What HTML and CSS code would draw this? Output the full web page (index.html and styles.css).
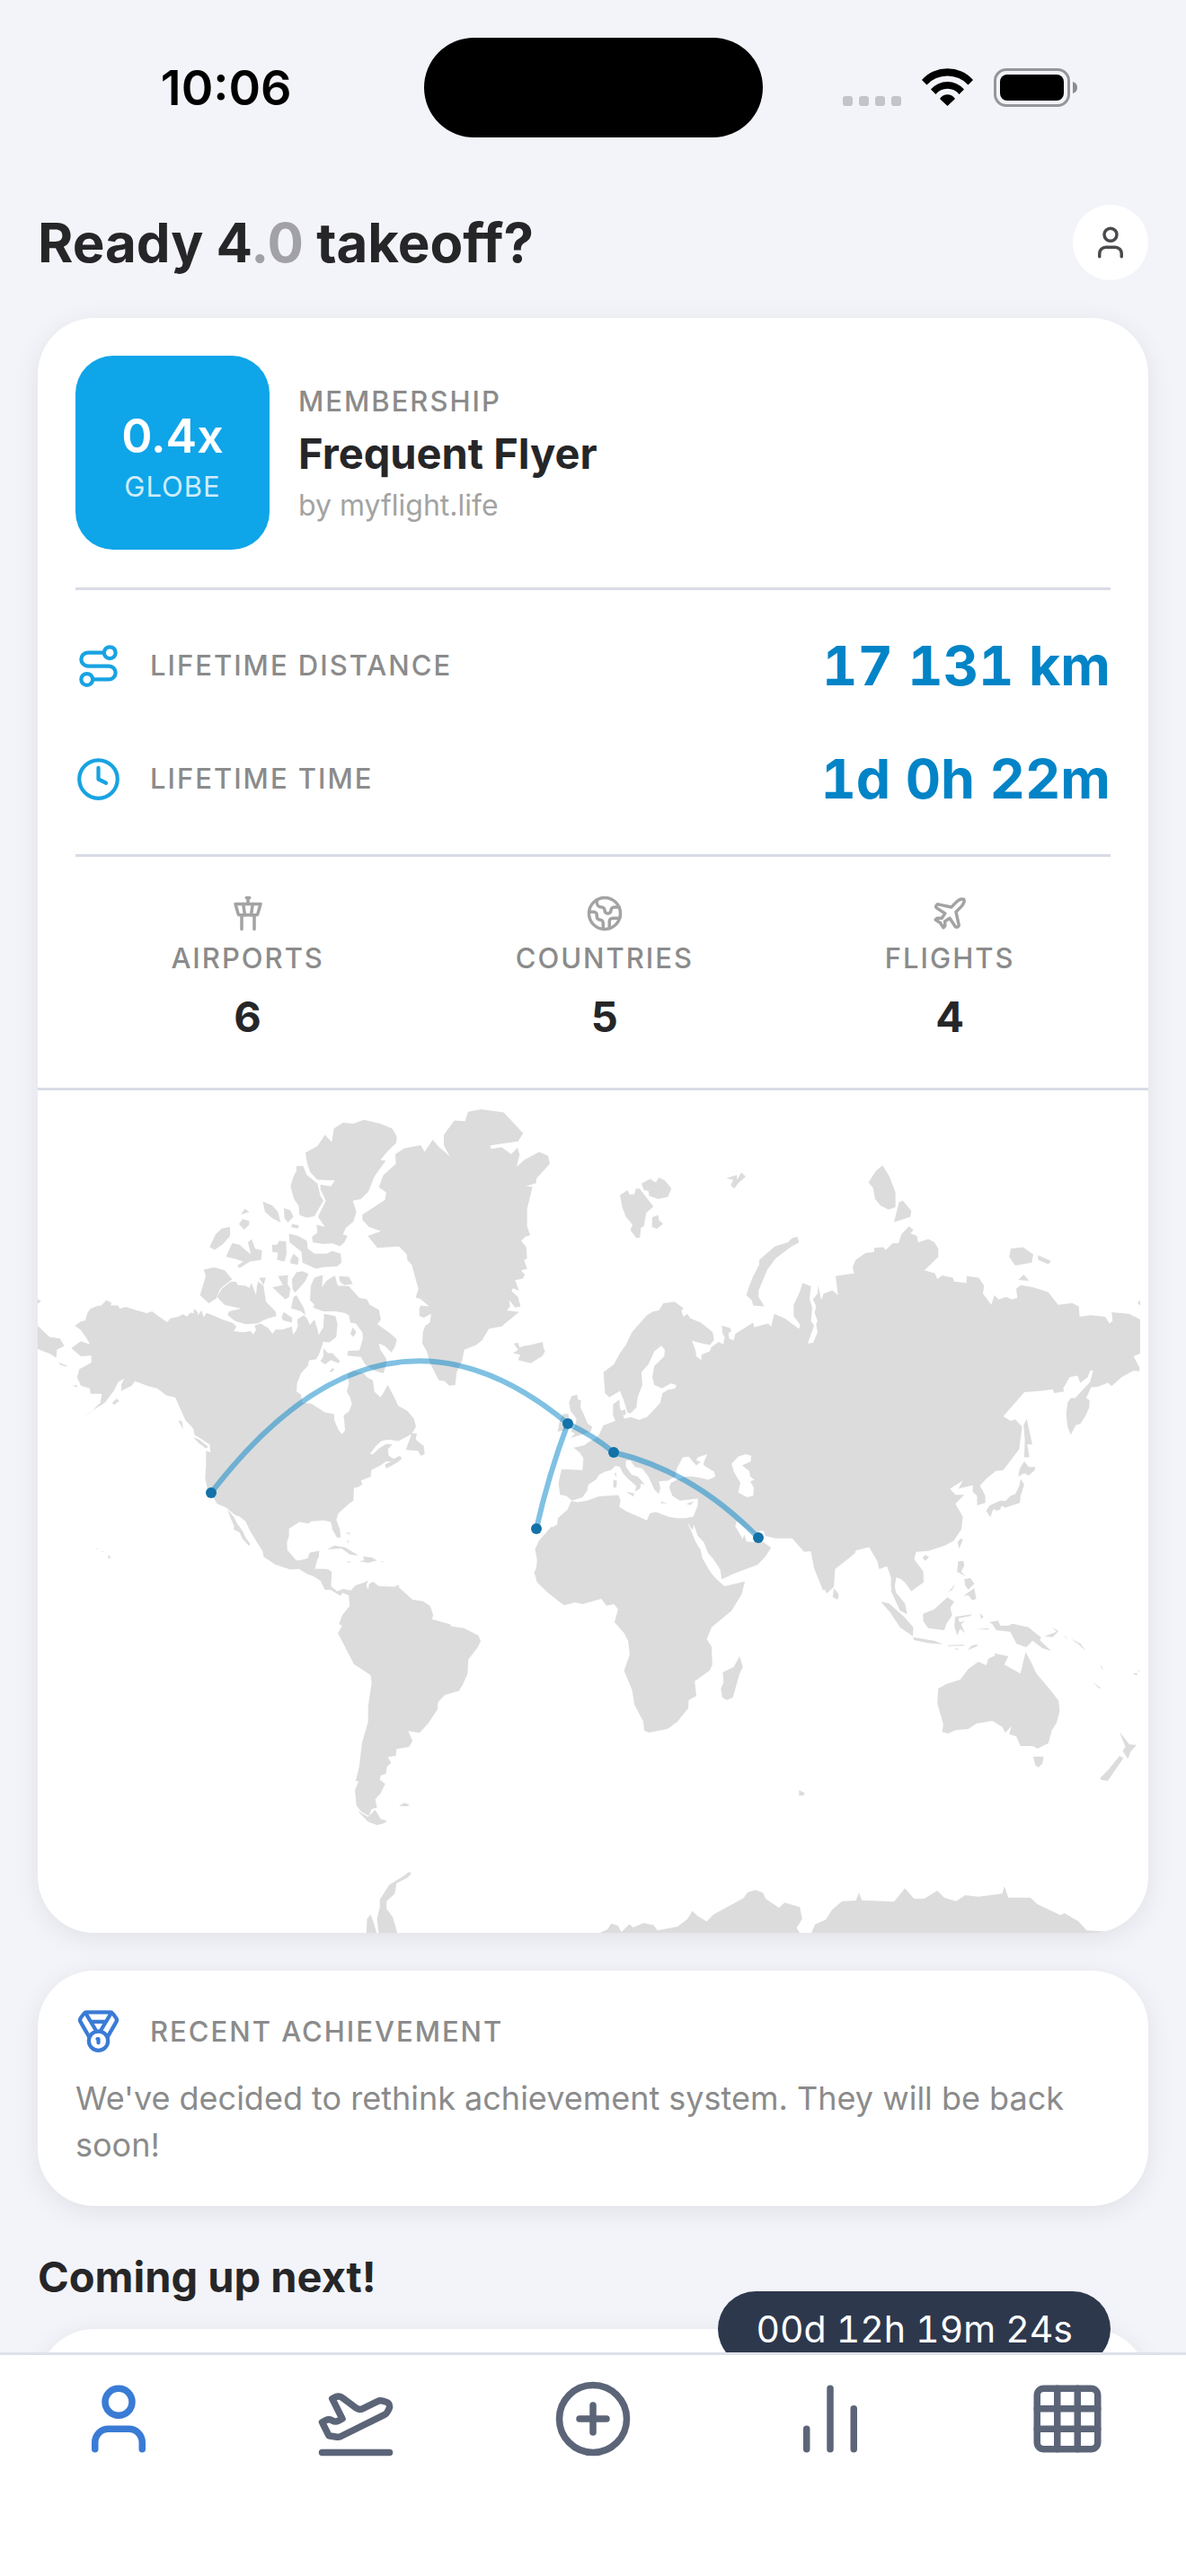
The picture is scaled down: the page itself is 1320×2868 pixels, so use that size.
FILE: index.html
```
<!DOCTYPE html>
<html lang="en">
<head>
  <meta charset="UTF-8" />
  <meta name="viewport" content="width=device-width, initial-scale=1.0" />
  <title>myflight.life</title>
  <link rel="stylesheet" href="styles.css">
</head>
<body>
  <div class="app">
    <div class="status-bar">
      <span class="time">10:06</span>
      <span class="island"></span>
      <svg class="status-icons" viewBox="0 0 261 43" aria-hidden="true">
        <g fill="#c2c4c8">
          <rect x="0" y="31" width="11" height="11" rx="3" />
          <rect x="18" y="31" width="11" height="11" rx="3" />
          <rect x="36" y="31" width="11" height="11" rx="3" />
          <rect x="54" y="31" width="11" height="11" rx="3" />
        </g>
        <path d="M88 13A38 38 0 0 1 145 13L139.500 18.500A31.500 31.500 0 0 0 93.500 18.500Z" />
        <path d="M98 23.500A24.400 24.400 0 0 1 135 23.500L129.500 29A16.600 16.600 0 0 0 103.500 29Z" />
        <path d="M108 34A10 10 0 0 1 125 34L116.500 42Z" />
        <rect x="169.500" y="1.500" width="82" height="40" rx="12.500" fill="none" stroke="#959699" stroke-width="3" />
        <rect x="175" y="7" width="71" height="29" rx="8" />
        <path d="M256 15c3.500 1 5 3.500 5 6.500s-1.500 5.500-5 6.500z" fill="#8b8c8f" />
      </svg>
    </div>

    <main class="content">
      <header class="header">
        <h1>Ready 4<span class="muted">.0</span> takeoff?</h1>
        <button class="avatar" aria-label="Profile">
          <svg class="icon" viewBox="0 0 24 24"><path d="M19 21v-2a4 4 0 0 0-4-4H9a4 4 0 0 0-4 4v2" /><circle cx="12" cy="7" r="4" /></svg>
        </button>
      </header>

      <section class="card">
        <div class="card-body">
          <div class="membership">
            <div class="globe">
              <strong>0.4x</strong>
              <span>GLOBE</span>
            </div>
            <div class="member-info">
              <span class="label">MEMBERSHIP</span>
              <h2>Frequent Flyer</h2>
              <span class="by">by myflight.life</span>
            </div>
          </div>

          <div class="lifetime">
            <div class="row">
              <svg class="icon blue" viewBox="0 0 24 24"><circle cx="6" cy="19" r="3" /><path d="M9 19h8.500a3.500 3.500 0 0 0 0-7h-11a3.500 3.500 0 0 1 0-7H15" /><circle cx="18" cy="5" r="3" /></svg>
              <span class="label">LIFETIME DISTANCE</span>
              <strong class="value">17 131 km</strong>
            </div>
            <div class="row">
              <svg class="icon blue" viewBox="0 0 24 24"><circle cx="12" cy="12" r="10" /><path d="M12 6v6l4 2" /></svg>
              <span class="label">LIFETIME TIME</span>
              <strong class="value">1d 0h 22m</strong>
            </div>
          </div>

          <div class="stats">
            <div class="stat">
              <svg class="icon" viewBox="0 0 24 24"><path d="M18.200 12.270 20 6H4l1.800 6.270a1 1 0 0 0 .95.73h10.500a1 1 0 0 0 .96-.73Z" /><path d="M8 13v9M16 22v-9M9 6l1 7M15 6l-1 7M12 6V2M13 2h-2" /></svg>
              <span class="label">AIRPORTS</span>
              <strong>6</strong>
            </div>
            <div class="stat">
              <svg class="icon" viewBox="0 0 24 24"><path d="M21.540 15H17a2 2 0 0 0-2 2v4.540" /><path d="M7 3.340V5a3 3 0 0 0 3 3a2 2 0 0 1 2 2c0 1.100.9 2 2 2a2 2 0 0 0 2-2c0-1.100.9-2 2-2h3.170" /><path d="M11 21.950V18a2 2 0 0 0-2-2a2 2 0 0 1-2-2v-1a2 2 0 0 0-2-2H2.050" /><circle cx="12" cy="12" r="10" /></svg>
              <span class="label">COUNTRIES</span>
              <strong>5</strong>
            </div>
            <div class="stat">
              <svg class="icon" viewBox="0 0 24 24"><path d="M17.800 19.200 16 11l3.500-3.500C21 6 21.500 4 21 3c-1-.5-3 0-4.500 1.500L13 8 4.800 6.200c-.5-.1-.9.1-1.100.5l-.3.5c-.2.5-.1 1 .3 1.300L9 12l-2 3H4l-1 1 3 2 2 3 1-1v-3l3-2 3.500 5.300c.3.4.8.5 1.300.3l.5-.2c.4-.3.6-.7.5-1.200z" /></svg>
              <span class="label">FLIGHTS</span>
              <strong>4</strong>
            </div>
          </div>
        </div>

        <svg class="map" viewBox="42 1214 1236 938" role="img" aria-label="Flight map">
          <!-- North America -->
          <g class="land" transform="translate(40 1210) scale(.3333 .3571)">
            <path d="M130 745L148 733 165 728 172 705 182 692 205 683 218 682 235 665 252 673 250 682 275 682 280 692 300 686 330 695 370 706 388 700 412 717 438 734 450 722 475 717 490 709 505 716 515 704 527 706 527 692 540 702 540 713 553 697 560 718 570 705 590 712 622 725 640 731 655 735 670 748 660 762 690 765 718 762 725 772 735 758 730 745 750 738 775 752 790 770 800 757 822 757 855 748 858 772 868 762 875 745 872 725 895 712 905 722 915 742 930 725 938 750 945 775 955 755 962 775 958 800 945 835 935 850 912 853 908 870 885 893 872 925 870 950 885 960 890 985 920 988 945 1003 965 1015 995 1020 997 1040 1010 1070 1022 1083 1032 1072 1030 1045 1027 1025 1045 1012 1055 990 1050 970 1038 950 1045 925 1040 895 1060 885 1095 893 1105 905 1125 915 1130 950 1150 968 1160 955 1175 930 1195 965 1210 995 1240 1010 1262 1035 1269 1060 1255 1082 1230 1095 1210 1105 1180 1100 1155 1103 1135 1120 1115 1145 1125 1145 1145 1128 1170 1113 1190 1115 1175 1130 1178 1150 1195 1160 1215 1150 1222 1160 1205 1172 1170 1190 1165 1178 1185 1168 1170 1168 1150 1180 1120 1195 1118 1215 1085 1228 1090 1240 1075 1248 1062 1250 1060 1290 1045 1300 1010 1330 1003 1350 1015 1380 1018 1405 1005 1405 990 1380 985 1357 960 1352 920 1355 910 1362 880 1357 845 1378 845 1400 838 1420 840 1450 855 1475 880 1477 910 1470 915 1452 945 1447 945 1465 935 1480 930 1503 965 1503 988 1512 985 1568 965 1568 950 1540 925 1525 905 1515 880 1500 850 1505 800 1490 760 1465 758 1450 735 1415 715 1385 700 1355 680 1340 665 1335 635 1312 605 1300 595 1285 575 1265 565 1220 568 1180 568 1135 583 1140 580 1115 555 1100 530 1085 525 1065 500 1040 485 1010 465 968 435 962 405 940 375 933 330 918 320 932 285 948 285 928 295 910 275 920 262 945 230 985 150 1032 185 1012 215 985 220 957 182 957 180 940 150 932 137 905 145 880 165 870 185 860 185 838 150 840 118 815 150 793 180 803 170 785 148 757Z" />
            <path d="M640 1318L660 1340 672 1362 690 1385 700 1405 715 1425 712 1432 690 1410 680 1390 660 1380 662 1370 650 1345Z" />
            <path d="M605 655L620 630 650 608 668 608 675 618 700 620 712 627 720 612 735 650 738 620 742 607 760 620 768 670 800 700 803 715 775 722 755 730 740 738 700 740 665 730 640 712 645 700 685 692 630 680 622 672Z" />
            <path d="M560 570L595 563 630 572 655 600 615 630 602 660 577 675 548 650 567 590Z" />
            <path d="M580 500L600 460 620 442 648 437 648 465 625 490 597 508ZM635 530L655 487 680 492 700 510 718 522 708 485 720 475 732 505 755 510 752 540 715 545 680 565 672 558 692 545 670 538Z" />
            <path d="M678 428L690 412 712 418 712 430 695 445ZM685 398L697 380 713 390ZM757 357L790 370 808 390 817 423 790 410 765 390ZM828 378L850 385 860 405 842 423 830 410ZM855 428L878 432 875 442 853 438Z" />
            <path d="M788 493L805 492 812 480 835 482 837 520 830 545 805 540 808 517 790 515ZM850 540L860 520 878 535 875 555 850 550Z" />
            <path d="M845 458L875 465 905 480 908 505 930 520 970 520 990 512 1018 520 1020 548 1005 560 960 562 935 567 890 548 887 515 865 498 847 485Z" />
            <path d="M850 310L860 280 870 262 870 247 892 247 905 275 940 302 950 340 960 355 930 403 905 408 880 400 877 370 862 350Z" />
            <path d="M900 205L940 185 965 150 988 172 995 130 1025 112 1060 115 1095 103 1150 115 1190 130 1205 155 1203 175 1175 200 1150 228 1168 230 1130 280 1110 327 1085 350 1058 355 1070 390 1060 420 1035 440 1025 460 1040 465 1030 485 1015 497 990 488 960 490 925 485 922 468 940 455 937 430 965 437 942 405 968 355 950 320 950 305 985 310 998 292 940 290 915 265 905 235Z" />
            <path d="M790 625L825 618 808 590 842 587 840 615 850 630 845 655 833 663 812 645ZM855 600L870 578 890 575 910 583 900 605 885 622 865 642 857 630ZM860 655L870 650 895 690 900 712 885 700 852 690ZM745 595L768 595 760 618ZM820 718L828 702 855 720 855 735 825 728Z" />
            <path d="M918 620L930 595 958 587 955 625 970 605 998 588 1008 620 1025 620 1045 622 1080 658 1105 662 1115 680 1145 695 1152 725 1140 740 1185 770 1205 787 1200 808 1187 828 1165 808 1145 800 1150 820 1170 848 1170 865 1160 893 1130 885 1100 867 1085 842 1040 838 1042 823 1080 822 1092 785 1090 765 1068 738 1050 735 1045 712 1030 705 1000 700 960 700 925 688 930 680 915 665Z" />
            <path d="M1050 770L1058 750 1070 765 1060 780ZM1012 590L1045 592 1058 615 1030 618 1015 608ZM962 708L1000 715 1007 740 1003 780 980 797 960 795 945 775 960 750Z" />
            <path d="M960 815L975 830 990 830 1015 855 1010 862 985 852 965 865 950 855 960 840ZM980 888L990 877 998 880 988 890Z" />
            <path d="M525 1093L545 1100 575 1122 568 1128 545 1112ZM475 1040L487 1042 492 1068ZM255 985L270 972 278 980 260 992ZM122 932L135 930 140 937ZM240 1460L250 1465 243 1473ZM218 1447L226 1449 222 1451ZM202 1439L206 1440 203 1443Z" />
            <path d="M6 745L45 780 80 785 95 808 70 820 68 845 45 832 6 818ZM77 860L105 870 100 872 80 866ZM6 662L17 668 6 676Z" />
            <path d="M1030 1392L1048 1390 1048 1398 1044 1394ZM1040 1410L1046 1420 1042 1422Z" />
          </g>
          <!-- Greenland, Europe, North Africa -->
          <g class="land" transform="translate(400 1210) scale(.3333 .3571)">
            <path d="M120 210L150 192 205 182 218 203 245 165 265 187 302 217 282 183 282 150 317 105 353 107 363 78 405 70 482 80 547 145 530 170 437 183 440 193 475 188 507 210 528 190 535 212 525 250 550 228 600 203 630 215 636 240 592 285 590 300 557 310 578 312 560 380 560 435 570 463 555 467 540 480 557 500 560 535 550 540 560 568 540 572 552 585 547 598 520 603 533 636 512 628 508 637 530 655 538 685 520 688 500 665 503 685 492 697 533 702 475 747 432 755 410 790 390 805 350 820 343 855 325 890 320 930 300 932 285 918 265 915 235 860 225 825 210 800 212 765 220 745 235 735 240 708 215 720 200 715 200 690 205 682 233 685 205 662 188 657 197 630 175 555 160 540 158 522 132 498 60 502 28 465 72 450 32 437 10 415 10 398 85 353 90 330 65 313 80 275 122 240Z" />
            <path d="M155 1132L175 1080 192 1080 188 1100 215 1120 218 1145 205 1150 195 1135Z" />
            <path d="M515 800L530 798 535 812 550 808 570 805 592 800 612 795 615 815 620 825 610 840 572 862 530 852 537 835 513 830 530 820Z" />
            <path d="M870 338L895 322 902 335 918 335 923 318 935 317 982 373 958 393 950 435 940 440 937 470 925 472 905 447 912 430 890 405 878 375ZM942 302L970 287 990 298 1000 283 1020 292 1042 317 1030 343 998 350 968 340 965 325 950 322ZM978 407L998 400 1000 415 1014 427 993 443 977 437Z" />
            <path d="M708 965L727 960 730 975 740 977 738 1000 750 1022 762 1050 778 1060 772 1075 740 1085 705 1095 720 1080 705 1075 720 1060 725 1035 705 1010 700 985ZM662 1075L668 1045 680 1020 698 1020 700 1050 690 1070Z" />
            <path d="M815 890L850 865 870 830 890 805 910 765 960 712 982 700 1000 697 1015 675 1052 670 1082 690 1075 698 1082 717 1095 708 1105 722 1140 735 1180 765 1184 790 1170 805 1145 800 1110 792 1122 820 1125 840 1142 852 1142 835 1170 825 1175 812 1200 795 1215 803 1220 780 1213 770 1210 745 1238 752 1242 762 1232 768 1235 785 1235 1525 1210 1535 1205 1505 1180 1470 1165 1455 1150 1420 1130 1400 1117 1365 1112 1383 1097 1360 1110 1400 1140 1445 1145 1470 1170 1510 1200 1545 1212 1558 1212 1568 620 1568 610 1555 583 1515 597 1490 595 1450 587 1440 610 1405 640 1375 660 1365 663 1345 695 1318 707 1292 730 1295 760 1290 800 1277 865 1273 872 1290 868 1310 895 1325 920 1335 960 1352 970 1330 990 1325 1030 1340 1060 1345 1090 1345 1115 1340 1130 1305 1130 1283 1105 1287 1070 1290 1045 1275 1035 1250 1040 1235 1060 1225 1090 1215 1115 1215 1145 1220 1165 1225 1188 1215 1185 1200 1150 1180 1150 1170 1162 1145 1130 1155 1125 1165 1140 1170 1125 1180 1110 1165 1100 1153 1080 1155 1060 1190 1055 1215 1030 1228 1000 1230 1005 1250 1000 1270 985 1255 965 1215 945 1190 920 1185 905 1165 890 1165 890 1185 910 1210 930 1215 953 1240 940 1238 938 1252 920 1262 925 1245 895 1220 880 1205 870 1185 855 1182 840 1195 820 1200 800 1210 790 1225 765 1240 760 1260 745 1280 710 1290 690 1275 670 1272 665 1235 675 1192 745 1195 748 1158 735 1140 715 1125 750 1118 770 1105 790 1095 800 1085 815 1055 845 1045 855 1040 847 1025 847 990 868 975 870 1000 885 1035 905 1030 935 1038 960 1030 980 1010 1005 985 1012 955 1030 945 1055 940 1058 930 1040 925 1010 940 985 930 978 905 985 870 1018 840 1020 820 1008 807 985 825 965 865 942 890 945 930 930 965 925 1000 905 1018 895 1015 882 975 870 948 835 968 820 955Z" />
            <path d="M890 1262L918 1268 915 1278ZM848 1225L860 1228 858 1250 848 1248ZM852 1205L858 1203 857 1218ZM1005 1293L1030 1298 1008 1299ZM1092 1300L1118 1292 1105 1304ZM874 1010L888 1005 890 1022 880 1024Z" />
          </g>
          <!-- Asia -->
          <g class="land" transform="translate(800 1210) scale(.3333 .3571)">
            <path d="M20 798L32 765 30 785 50 790 55 770 115 735 118 750 165 738 175 748 185 708 220 722 268 755 272 742 250 715 250 680 270 640 280 612 308 622 303 660 312 690 308 730 318 745 297 800 315 798 330 765 325 740 330 730 320 705 325 685 315 662 330 645 332 618 342 665 350 645 380 635 398 650 390 590 452 582 447 562 457 540 490 518 518 515 520 502 548 500 558 508 580 488 600 487 610 460 635 435 650 447 640 457 662 465 665 485 700 475 720 485 733 505 733 530 687 572 722 582 730 600 745 588 782 595 785 607 827 612 828 590 868 595 886 620 882 645 910 680 920 650 935 663 960 655 978 663 997 658 993 630 1008 618 1050 625 1100 640 1133 680 1180 674 1202 685 1205 717 1240 712 1290 717 1305 738 1315 730 1312 703 1370 708 1407 725 1407 832 1385 840 1405 875 1405 887 1385 885 1345 905 1312 933 1300 923 1265 935 1243 937 1227 970 1238 978 1237 1000 1225 1025 1208 1050 1192 1055 1175 1085 1165 1060 1160 1020 1165 985 1175 970 1190 970 1240 920 1250 885 1240 885 1232 905 1207 923 1198 900 1172 905 1150 940 1153 950 1120 955 1115 943 1085 947 1020 952 950 1028 975 1042 990 1037 1013 1060 1003 1130 950 1195 925 1198 895 1220 872 1243 890 1275 890 1297 863 1305 862 1275 848 1262 848 1242 800 1253 815 1228 772 1253 790 1272 820 1272 790 1300 815 1340 810 1380 785 1415 755 1430 700 1447 660 1450 650 1470 682 1510 683 1545 645 1568 610 1535 593 1530 585 1568 575 1560 575 1530 562 1495 535 1503 530 1480 502 1435 460 1445 440 1465 385 1505 385 1540 372 1568 347 1568 318 1500 308 1448 285 1450 245 1408 190 1408 155 1400 150 1385 135 1385 130 1400 110 1390 60 1355 55 1370 80 1410 85 1395 92 1418 120 1420 150 1420 175 1437 155 1465 130 1490 45 1520 20 1530Z" />
            <path class="water" d="M43 1175L65 1153 90 1145 108 1150 107 1168 78 1180 102 1198 105 1215 120 1225 105 1230 117 1250 115 1275 95 1280 65 1265 72 1235 50 1200Z" />
            <path d="M92 650L102 620 115 590 135 555 135 540 188 497 230 485 245 472 262 467 268 485 240 500 190 535 162 570 133 635 133 655 152 685 115 682 110 665Z" />
            <path d="M500 298L525 262 547 245 570 280 590 330 590 375 567 383 540 370 522 350 515 315ZM585 422L602 360 615 355 643 387 640 405ZM25 285L60 275 62 290 75 267 90 280 65 300 52 317 40 307 48 290Z" />
            <path d="M970 530L975 505 1015 500 1050 522 1045 548 990 557ZM1065 525L1110 543 1100 553 1067 540ZM1000 602L1018 585 1037 605ZM1398 674L1407 665 1407 682Z" />
            <path d="M1018 1055L1028 1035 1047 1115 1030 1115 1037 1155 1020 1155 1022 1100ZM1000 1215L1005 1190 1020 1168 1035 1185 1057 1185 1055 1195 1035 1212 1020 1205ZM1008 1222L1020 1240 1008 1275 1005 1297 955 1313 945 1303 975 1275 990 1270 1003 1245ZM893 1322L905 1305 940 1290 960 1292 955 1305 915 1320 907 1342ZM922 1316L942 1310 940 1318 925 1322Z" />
            <path d="M797 1420L808 1408 815 1412 803 1440ZM680 1468L690 1460 702 1465 690 1478Z" />
          </g>
          <!-- Central and South America -->
          <g class="land" transform="translate(40 1700) scale(.3954 .3333)">
            <path d="M640 95L700 130 720 142 740 140 765 158 795 170 822 205 850 225 858 230 862 220 885 230 885 212 865 207 848 215 828 195 832 150 822 142 785 140 798 82 770 88 765 105 735 115 710 80Z" />
            <path d="M880 220L900 195 925 185 935 178 930 195 935 210 938 190 950 183 965 198 1020 200 1060 243 1090 248 1110 265 1118 295 1115 308 1165 325 1170 332 1205 338 1245 362 1252 380 1245 400 1217 443 1215 490 1200 530 1190 548 1150 562 1132 585 1130 610 1105 655 1080 688 1048 682 1060 715 1050 735 1015 742 1013 765 990 768 1000 788 988 800 985 825 970 830 968 845 983 858 970 890 955 910 960 938 945 942 937 965 915 950 902 930 898 880 908 850 900 848 910 800 918 720 935 650 935 600 945 520 942 495 895 458 850 355 862 330 853 325 862 295 883 265Z" />
            <path d="M905 948L935 968 955 945 970 975 988 982 980 990 960 996 935 985ZM1022 932L1035 922 1052 927 1045 933Z" />
            <path d="M820 75L840 62 870 68 908 95 885 93 860 72ZM908 115L925 112 920 98 945 102 960 112 935 120ZM875 114L890 118 878 119ZM970 114L985 116 972 117ZM1008 198L1022 194 1022 202Z" />
            <path d="M930 1360L932 1310 942 1295 950 1320 960 1360ZM965 1360L960 1310 968 1270 968 1245 995 1195 1030 1170 1050 1152 1057 1158 1045 1172 1015 1190 1010 1225 987 1250 987 1275 1005 1305 1018 1360Z" />
          </g>
          <!-- Africa, South Asia, Oceania, Antarctica -->
          <g class="land" transform="translate(600 1700) scale(.4464 .3333)">
            <path d="M30 0L0 45 -10 75 -5 110 -8 150 -11 155 -5 185 22 220 62 262 90 252 108 258 155 240 168 263 187 258 197 275 188 318 212 355 222 380 226 425 212 480 232 545 238 595 260 650 262 680 273 687 320 675 345 650 372 605 373 578 392 565 388 515 425 480 432 460 430 400 418 375 430 335 480 280 505 225 513 182 462 198 447 180 430 160 405 100 375 0Z" />
            <path d="M500 432L508 468 500 490 483 570 468 578 457 570 453 540 460 520 458 485 485 468Z" />
            <path d="M677 80L690 150 717 222 735 200 738 140 790 85ZM732 235L735 205 747 225 745 242Z" />
            <path d="M840 80L850 140 868 130 880 175 878 215 900 280 918 292 912 255 890 220 885 185 890 165 910 180 928 215 958 185 958 150 935 110 940 80Z" />
            <path d="M852 250L872 255 910 300 933 335 932 365 900 335 875 285ZM932 368L985 380 1007 392 970 388 935 378Z" />
            <path d="M957 290L985 275 1018 235 1035 250 1025 270 1030 295 1015 325 1010 345 970 338 958 315ZM1038 300L1080 292 1075 298 1045 305 1048 318 1062 315 1052 325 1062 355 1050 340 1042 362 1035 330Z" />
            <path d="M1045 115L1058 113 1060 130 1052 150 1065 165 1042 150ZM1058 230L1085 205 1090 240 1080 245 1070 228ZM1060 175L1075 170 1085 190 1070 210 1062 195ZM1020 218L1038 190 1030 210Z" />
            <path d="M1018 395L1060 393 1058 397 1020 398ZM1068 412L1080 395 1095 392 1090 400ZM1100 288L1108 300 1102 308ZM1088 342L1122 338 1120 343ZM1035 405L1048 408 1042 411Z" />
            <path d="M1122 318L1145 313 1150 330 1170 330 1180 323 1220 335 1252 370 1248 378 1277 415 1255 405 1230 380 1215 402 1190 390 1175 350 1140 345 1130 325ZM1260 365L1290 350 1280 335 1295 348 1280 368ZM1308 360L1318 375 1312 370ZM1325 373L1350 390 1363 415 1348 395Z" />
            <path d="M995 540L1015 525 1050 510 1070 475 1095 450 1115 462 1120 440 1137 430 1135 422 1170 432 1160 460 1200 490 1213 418 1228 455 1240 490 1275 545 1295 580 1298 615 1290 655 1278 680 1270 722 1243 740 1230 732 1200 732 1190 700 1172 692 1178 665 1162 688 1155 668 1130 648 1090 657 1070 675 1040 678 1020 690 1005 685 1008 660 993 590Z" />
            <path d="M1232 767L1258 767 1255 790 1245 803 1237 795ZM1447 685L1465 715 1472 727 1490 728 1475 750 1468 775 1455 748 1462 735ZM1398 840L1420 810 1447 765 1457 772 1440 805 1418 848 1402 845Z" />
            <path d="M1380 517L1402 540 1395 538ZM1480 490L1492 488 1490 496ZM1400 460L1407 478 1402 472ZM1492 482L1498 478 1496 483ZM648 880L662 888 660 897 648 897Z" />
            <path d="M145 1360L170 1345 180 1325 197 1332 205 1353 225 1328 235 1338 260 1323 285 1330 295 1348 345 1335 370 1310 382 1283 395 1300 418 1318 435 1295 480 1262 510 1240 520 1220 540 1213 558 1222 565 1242 598 1272 612 1255 650 1270 656 1310 642 1340 652 1360Z" />
            <path d="M678 1360L688 1328 715 1312 730 1280 755 1250 790 1248 797 1222 805 1247 885 1252 912 1207 935 1242 960 1242 993 1215 1010 1238 1040 1250 1062 1230 1095 1235 1155 1225 1160 1200 1170 1238 1225 1238 1242 1260 1300 1297 1310 1290 1345 1318 1365 1348 1415 1352 1400 1360Z" />
          </g>
          <g class="routes">
            <path d="M235 1662Q426 1414 632 1585" />
            <path d="M632 1585Q660 1598 683 1617" />
            <path d="M683 1617Q772 1638 844 1712" />
            <path d="M632 1585Q611 1640 597 1702" />
          </g>
          <g class="airports">
            <circle cx="235" cy="1662" r="6" />
            <circle cx="632" cy="1585" r="6" />
            <circle cx="683" cy="1617" r="6" />
            <circle cx="597" cy="1702" r="6" />
            <circle cx="844" cy="1712" r="6" />
          </g>
        </svg>
      </section>

      <section class="card achievement">
        <div class="row">
          <svg class="icon" viewBox="0 0 24 24"><path d="M7.210 15 2.660 7.140a2 2 0 0 1 .13-2.200L4.400 2.800A2 2 0 0 1 6 2h12a2 2 0 0 1 1.600.8l1.600 2.140a2 2 0 0 1 .14 2.200L16.790 15" /><path d="M11 12 5.120 2.200M13 12l5.880-9.800M8 7h8" /><circle cx="12" cy="17" r="5" /><path d="M12 18v-2h-.5" /></svg>
          <span class="label">RECENT ACHIEVEMENT</span>
        </div>
        <p>We've decided to rethink achievement system. They will be back soon!</p>
      </section>

      <h2 class="section-title">Coming up next!</h2>
      <section class="card next-flight">
        <span class="countdown">00d 12h 19m 24s</span>
      </section>
    </main>

    <nav class="tab-bar">
      <a href="#profile" class="active" aria-label="Profile">
        <svg class="icon" viewBox="0 0 24 24"><path d="M19 21v-2a4 4 0 0 0-4-4H9a4 4 0 0 0-4 4v2" /><circle cx="12" cy="7" r="4" /></svg>
      </a>
      <a href="#flights" aria-label="Flights">
        <svg class="icon" viewBox="0 0 24 24"><path d="M2 22h20" /><path d="M6.360 17.400 4 17l-2-4 1.100-.55a2 2 0 0 1 1.800 0l.17.1a2 2 0 0 0 1.800 0L8 12 5 6l.9-.45a2 2 0 0 1 2.090.2l4.020 3a2 2 0 0 0 2.100.2l4.190-2.060a2.410 2.410 0 0 1 1.730-.17L21 7a1.400 1.400 0 0 1 .87 1.990l-.38.76c-.23.46-.6.84-1.070 1.080L7.580 17.200a2 2 0 0 1-1.220.18Z" /></svg>
      </a>
      <a href="#add" aria-label="Add flight">
        <svg class="icon" viewBox="0 0 24 24"><circle cx="12" cy="12" r="10" /><path d="M8 12h8M12 8v8" /></svg>
      </a>
      <a href="#stats" aria-label="Statistics">
        <svg class="icon" viewBox="0 0 24 24"><path d="M5 21v-6M12 21V3M19 21V9" /></svg>
      </a>
      <a href="#more" aria-label="More">
        <svg class="icon" viewBox="0 0 24 24"><rect x="3" y="3" width="18" height="18" rx="2" /><path d="M3 9h18M3 15h18M9 3v18M15 3v18" /></svg>
      </a>
    </nav>
  </div>
</body>
</html>
```
FILE: styles.css
```
* {
  box-sizing: border-box;
}

body {
  margin: 0;
  font-family: Inter, "Liberation Sans", sans-serif;
  background-color: #f3f4f9;
  color: #262628;
}

h1, h2, p {
  margin: 0;
}

.app {
  display: flex;
  flex-direction: column;
  height: 100vh;
}

/* status bar */
.status-bar {
  display: grid;
  grid-template-columns: 1fr 377px 1fr;
  align-items: center;
  justify-items: center;
  padding: 42px 32px 33px;
  color: #000;
}

.time {
  font-size: 54px;
  font-weight: 600;
}

.island {
  width: 100%;
  height: 111px;
  border-radius: 56px;
  background-color: #000;
}

.status-icons {
  width: 261px;
}

/* page */
.content {
  flex: 1;
  min-height: 0;
  overflow-y: auto;
  scrollbar-width: none;
  padding: 42px;
}

.header {
  display: flex;
  align-items: center;
  justify-content: space-between;
  margin-bottom: 42px;
}

h1 {
  font-size: 60px;
  line-height: 84px;
  font-weight: 700;
}

h2 {
  font-size: 47px;
  line-height: 74px;
  font-weight: 700;
}

.muted {
  color: #a1a1a6;
}

.icon {
  display: block;
  fill: none;
  stroke: currentColor;
  stroke-width: 2;
  stroke-linecap: round;
  stroke-linejoin: round;
}

.avatar {
  display: flex;
  align-items: center;
  justify-content: center;
  width: 84px;
  height: 84px;
  padding: 0;
  border: none;
  border-radius: 50%;
  background-color: #fff;
  color: #4b4b4e;
  cursor: pointer;
}

.avatar .icon {
  width: 42px;
}

.card {
  background-color: #fff;
  border-radius: 63px;
  box-shadow: 0 6px 30px rgba(0, 0, 0, 0.08);
}

.card-body {
  padding: 42px 42px 0;
}

.label {
  font-size: 31px;
  line-height: 42px;
  font-weight: 500;
  letter-spacing: 2px;
  color: #8b8b8b;
}

.membership {
  display: flex;
  align-items: center;
  gap: 32px;
  padding-bottom: 42px;
}

.globe {
  display: flex;
  flex-direction: column;
  align-items: center;
  justify-content: center;
  width: 216px;
  height: 216px;
  padding-top: 6px;
  border-radius: 42px;
  background-color: #0fa5e9;
  color: #fff;
}

.globe strong {
  font-size: 52px;
  line-height: 70px;
  font-weight: 600;
}

.globe span {
  font-size: 31px;
  line-height: 42px;
  letter-spacing: 1px;
  color: #cfedfb;
}

.member-info {
  display: flex;
  flex-direction: column;
  padding-top: 2px;
}

.by {
  font-size: 32px;
  line-height: 42px;
  color: #a3a3a3;
}

.lifetime {
  display: flex;
  flex-direction: column;
  gap: 42px;
  padding: 42px 0;
  border-top: 3px solid #d9dce6;
  border-bottom: 3px solid #d9dce6;
}

.row {
  display: flex;
  align-items: center;
  gap: 32px;
}

.row .icon {
  width: 51px;
}

.blue {
  color: #18a3e2;
}

.value {
  margin-left: auto;
  font-size: 61px;
  line-height: 84px;
  font-weight: 700;
  font-variant-numeric: tabular-nums;
  color: #0284c7;
}

.stats {
  display: flex;
  justify-content: space-around;
  padding: 42px 0;
}

.stat {
  display: flex;
  flex-direction: column;
  align-items: center;
}

.stat .icon {
  width: 42px;
  margin-bottom: 8px;
  color: #a3a3a3;
}

.stat strong {
  margin-top: 7px;
  font-size: 47px;
  line-height: 74px;
  font-weight: 700;
}

/* map */
.map {
  display: block;
  width: 100%;
  border-top: 3px solid #d9dce6;
  border-radius: 0 0 63px 63px;
}

.land {
  fill: #dcdcdc;
}

.water {
  fill: #fff;
}

.routes {
  fill: none;
  stroke: #0284c7;
  stroke-opacity: 0.5;
  stroke-width: 6;
}

.airports {
  fill: #1372a8;
}

/* achievement */
.achievement {
  margin-top: 42px;
  padding: 42px;
}

.achievement .icon {
  color: #3a7bd5;
}

.achievement p {
  margin-top: 23px;
  font-size: 36px;
  line-height: 52px;
  color: #8b8b8b;
}

/* next flight */
.section-title {
  margin: 42px 0 21px;
}

.next-flight {
  position: relative;
  height: 420px;
}

.countdown {
  position: absolute;
  top: -42px;
  right: 42px;
  padding: 0 42px;
  border-radius: 42px;
  background-color: #2e384d;
  color: #fff;
  font-size: 41px;
  line-height: 84px;
  font-variant-numeric: tabular-nums;
}

/* bottom tabs */
.tab-bar {
  display: flex;
  position: relative;
  padding: 26px 0 130px;
  border-top: 3px solid #dfe1ea;
  background-color: #fff;
}

.tab-bar a {
  display: flex;
  flex: 1;
  justify-content: center;
  color: #5c6578;
}

.tab-bar a.active {
  color: #3a7bd5;
}

.tab-bar .icon {
  width: 90px;
}
```
